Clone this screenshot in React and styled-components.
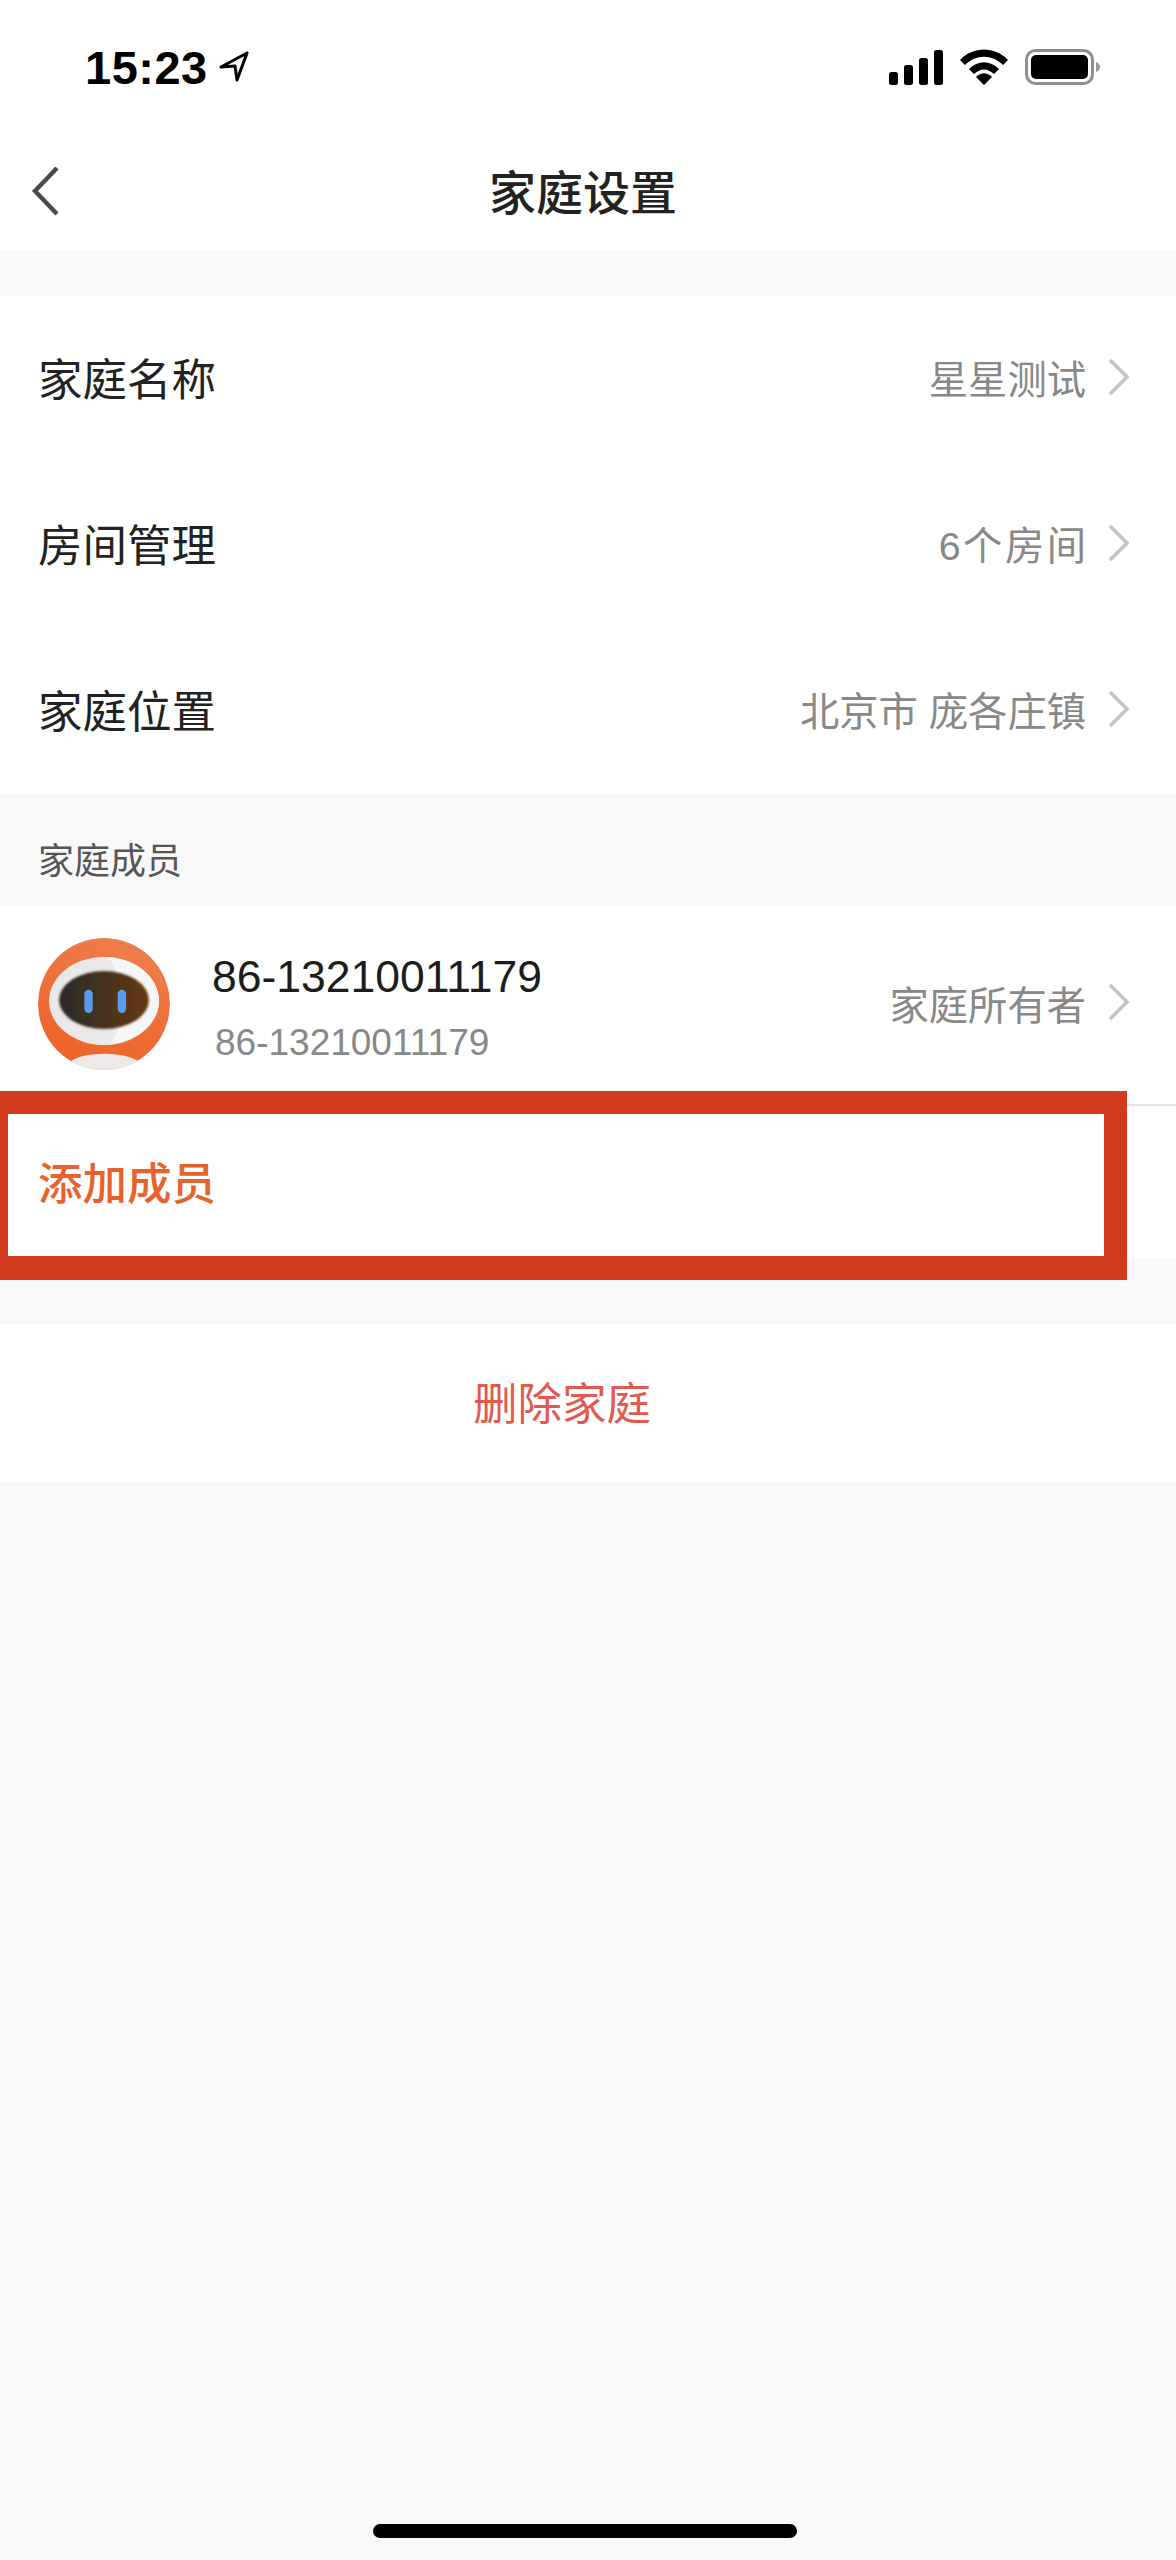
import React from 'react'
import styled, { createGlobalStyle } from 'styled-components'

const GlobalStyle = createGlobalStyle`
html, body {
    margin: 0;
    padding: 0;
    background: #f8f8f8;
}
* {
    box-sizing: border-box;
}
`

const Page = styled.div`
position: relative;
width: 1176px;
height: 2560px;
overflow: hidden;
background: #f8f8f8;
font-family: "Liberation Sans", "Noto Sans CJK SC", sans-serif;
color: #1f1f1f;
`

const Top = styled.div`
background: #fff;
height: 251px;
`

const StatusBar = styled.div`
display: flex;
align-items: center;
justify-content: space-between;
height: 134px;
padding: 0 76px 0 85px;
`

const Time = styled.div`
display: flex;
align-items: center;
gap: 11px;
font-size: 47px;
font-weight: 700;
letter-spacing: 0.5px;
color: #000;
`

const StatusIcons = styled.div`
display: flex;
align-items: center;
gap: 17px;
`

const NavBar = styled.div`
position: relative;
display: flex;
align-items: center;
justify-content: center;
height: 117px;
padding: 0 10px 6px 0;
`

const BackButton = styled.div`
position: absolute;
left: 31px;
top: 33px;
width: 30px;
height: 52px;
`

const Title = styled.div`
font-size: 47px;
font-weight: 500;
color: #222;
`

const Section = styled.div`
background: #fff;
margin-top: ${props => props.gap || 0}px;
`

const Row = styled.div`
display: flex;
align-items: center;
justify-content: ${props => props.center ? 'center' : 'space-between'};
height: ${props => props.height || 166}px;
padding: ${props => props.center ? '0 52px 0 0' : '0 46px 0 38px'};
`

const RowLabel = styled.div`
font-size: 44.5px;
font-weight: ${props => props.strong ? 500 : 400};
color: ${props => props.color || '#222'};
padding-bottom: 5px;
`

const RowRight = styled.div`
display: flex;
align-items: center;
gap: 22px;
padding-bottom: 5px;
`

const RowValue = styled.div`
font-size: 39.3px;
color: #888;
letter-spacing: ${props => props.spread || 0}px;
margin-right: ${props => -(props.spread || 0)}px;
`

const GroupTitle = styled.div`
display: flex;
align-items: center;
height: 111px;
padding: 16px 0 0 38px;
font-size: 36px;
color: #555;
`

const Member = styled.div`
display: flex;
align-items: center;
gap: 42px;
`

const Avatar = styled.svg`
display: block;
width: 132px;
height: 132px;
flex-shrink: 0;
margin-bottom: 2px;
`

const MemberText = styled.div`
display: flex;
flex-direction: column;
gap: 19px;
padding-top: 5px;
`

const MemberName = styled.div`
font-size: 44.5px;
line-height: 52px;
color: #1c1c1c;
`

const MemberSub = styled.div`
font-size: 37px;
line-height: 42px;
padding-left: 3px;
color: #888;
`

const Separator = styled.div`
height: 2px;
background: #e6e6e6;
`

const Highlight = styled.div`
position: absolute;
left: 0;
top: 1091px;
width: 1127px;
height: 189px;
border: solid #d13a1e;
border-width: 23px 23px 24px 8px;
pointer-events: none;
`

const HomeIndicator = styled.div`
position: absolute;
left: 373px;
top: 2524px;
width: 424px;
height: 14px;
border-radius: 7px;
background: #000;
`

const Chevron = () => (
    <svg width="22" height="38" viewBox="0 0 22 38">
        <path d="M2 2 L19 19 L2 36" fill="none" stroke="#c4c4c4" strokeWidth="3.6" />
    </svg>
)

const SignalIcon = () => (
    <svg width="54" height="35" viewBox="0 0 54 35">
        <rect x="0" y="22" width="9" height="13" rx="2.5" />
        <rect x="15" y="15" width="9" height="20" rx="2.5" />
        <rect x="30" y="8" width="9" height="27" rx="2.5" />
        <rect x="45" y="0" width="9" height="35" rx="2.5" />
    </svg>
)

const WifiIcon = () => (
    <svg width="48" height="36" viewBox="0 0 48 36">
        <path d="M0 11 C13 -3 35 -3 48 11 L43 16 C32 5 16 5 5 16 Z" />
        <path d="M9 20 C18 11 30 11 39 20 L34 25 C27 19 21 19 14 25 Z" />
        <path d="M24 36 L16 28 C21 23 27 23 32 28 Z" />
    </svg>
)

const BatteryIcon = () => (
    <svg width="75" height="36" viewBox="0 0 75 36">
        <rect x="1.5" y="1.5" width="66" height="33" rx="9" fill="none" stroke="#8f8f8f" strokeWidth="3" />
        <rect x="6" y="6" width="57" height="24" rx="5" />
        <path d="M71 13 C74 14 75 16 75 18 C75 20 74 22 71 23 Z" fill="#9a9a9a" />
    </svg>
)

const LocationIcon = () => (
    <svg width="30" height="32" viewBox="0 0 30 32">
        <path d="M28 2 L2 16 L16 15 L18 29 Z" fill="none" stroke="#000" strokeWidth="3" strokeLinejoin="round" />
    </svg>
)

const RobotAvatar = () => (
    <Avatar viewBox="0 0 132 132">
        <defs>
            <linearGradient id="shell" x1="0.7" y1="0" x2="0.3" y2="1">
                <stop offset="0" stopColor="#ee7e4d" />
                <stop offset="1" stopColor="#ee6228" />
            </linearGradient>
            <linearGradient id="face" x1="0" y1="0" x2="1" y2="0">
                <stop offset="0" stopColor="#2b2a2a" />
                <stop offset="1" stopColor="#663a10" />
            </linearGradient>
            <filter id="soft" x="-10%" y="-10%" width="120%" height="120%">
                <feGaussianBlur stdDeviation="1.2" />
            </filter>
            <clipPath id="round">
                <circle cx="66" cy="66" r="66" />
            </clipPath>
        </defs>
        <g clipPath="url(#round)">
            <circle cx="66" cy="66" r="66" fill="url(#shell)" />
            <ellipse cx="66" cy="63" rx="55" ry="44" fill="#ebe9e8" />
            <path d="M66 19 C82 22 78 50 84 64 C88 80 78 98 72 106 C92 105 121 88 121 63 C121 38 96 19 66 19 Z" fill="#f6f6f6" />
            <ellipse cx="66" cy="62" rx="45" ry="29" fill="url(#face)" filter="url(#soft)" />
            <rect x="46.3" y="51.7" width="8.4" height="23.3" rx="4.2" fill="#5b9bec" />
            <rect x="79.7" y="51.7" width="8.4" height="23.3" rx="4.2" fill="#5b9bec" />
            <path d="M32 124 C44 113 88 113 101 124 L92 136 L40 136 Z" fill="#ece9e8" />
        </g>
    </Avatar>
)

const SettingRow = ({ label, value, spread }) => (
    <Row>
        <RowLabel>{label}</RowLabel>
        <RowRight>
            <RowValue spread={spread}>{value}</RowValue>
            <Chevron />
        </RowRight>
    </Row>
)

const App = () => {
    return (
        <Page>
            <GlobalStyle />
            <Top>
                <StatusBar>
                    <Time>
                        15:23
                        <LocationIcon />
                    </Time>
                    <StatusIcons>
                        <SignalIcon />
                        <WifiIcon />
                        <BatteryIcon />
                    </StatusIcons>
                </StatusBar>
                <NavBar>
                    <BackButton>
                        <svg width="30" height="52" viewBox="0 0 30 52">
                            <path d="M26 1 L4 24 L26 47" fill="none" stroke="#4a4a4a" strokeWidth="4.4" />
                        </svg>
                    </BackButton>
                    <Title>家庭设置</Title>
                </NavBar>
            </Top>

            <Section gap={45}>
                <SettingRow label="家庭名称" value="星星测试" />
                <SettingRow label="房间管理" value="6个房间" spread={2.5} />
                <SettingRow label="家庭位置" value="北京市 庞各庄镇" />
            </Section>

            <GroupTitle>家庭成员</GroupTitle>

            <Section>
                <Row height={199}>
                    <Member>
                        <RobotAvatar />
                        <MemberText>
                            <MemberName>86-13210011179</MemberName>
                            <MemberSub>86-13210011179</MemberSub>
                        </MemberText>
                    </Member>
                    <RowRight>
                        <RowValue>家庭所有者</RowValue>
                        <Chevron />
                    </RowRight>
                </Row>
                <Separator />
                <Row height={153}>
                    <RowLabel strong color="#e8622c">添加成员</RowLabel>
                </Row>
            </Section>

            <Section gap={65}>
                <Row height={157} center>
                    <RowLabel color="#e25a4e">删除家庭</RowLabel>
                </Row>
            </Section>

            <Highlight />
            <HomeIndicator />
        </Page>
    )
}

export default App
